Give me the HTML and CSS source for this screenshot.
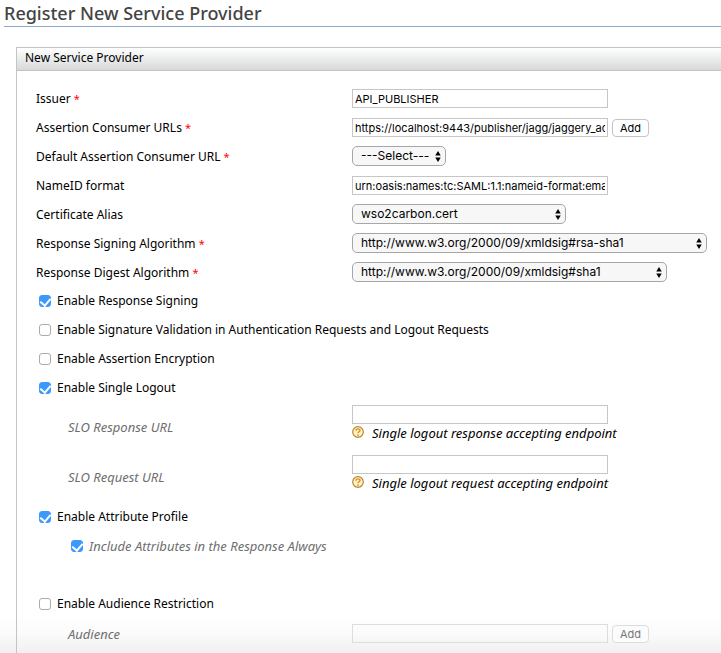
FILE: index.html
```html
<!DOCTYPE html>
<html lang="en">
<head>
<meta charset="utf-8">
<title>Register New Service Provider</title>
<link rel="stylesheet" href="styles.css">
</head>
<body>
<svg class="defs" aria-hidden="true">
  <symbol id="arrows" viewBox="0 0 6 12"><path d="M3 0 6 5H0zM3 12 0 7h6z"/></symbol>
  <symbol id="help" viewBox="0 0 12 12"><circle cx="6" cy="6" r="5.3" fill="#fdf3cf" stroke="#b8892b" stroke-width="1.2"/><path d="M4 4.7C4 2.2 8.1 2.3 8 4.5 7.9 5.8 6 5.8 6 7.3" fill="none" stroke="#e08a1e" stroke-width="1.4"/><circle cx="6" cy="9.1" r=".9" fill="#e08a1e"/></symbol>
</svg>
<main class="page">
  <h1 class="title">Register New Service Provider</h1>
  <form class="panel">
    <h2 class="panel-head">New Service Provider</h2>
    <div class="rows">
      <div class="row">
        <label for="issuer">Issuer <span class="required">*</span></label>
        <input class="text" id="issuer" type="text" value="API_PUBLISHER">
      </div>
      <div class="row">
        <label for="acs">Assertion Consumer URLs <span class="required">*</span></label>
        <div class="field"><input class="text" id="acs" type="text" value="https://localhost:9443/publisher/jagg/jaggery_acs.jag"><button class="add" type="button">Add</button></div>
      </div>
      <div class="row">
        <label for="default-acs">Default Assertion Consumer URL <span class="required">*</span></label>
        <div class="select select-s"><select id="default-acs"><option>---Select---</option></select><svg><use href="#arrows"/></svg></div>
      </div>
      <div class="row">
        <label for="nameid">NameID format</label>
        <input class="text" id="nameid" type="text" value="urn:oasis:names:tc:SAML:1.1:nameid-format:emailAddress">
      </div>
      <div class="row">
        <label for="alias">Certificate Alias</label>
        <div class="select select-m"><select id="alias"><option>wso2carbon.cert</option></select><svg><use href="#arrows"/></svg></div>
      </div>
      <div class="row">
        <label for="signing">Response Signing Algorithm <span class="required">*</span></label>
        <div class="select select-xl"><select id="signing"><option>http://www.w3.org/2000/09/xmldsig#rsa-sha1</option></select><svg><use href="#arrows"/></svg></div>
      </div>
      <div class="row">
        <label for="digest">Response Digest Algorithm <span class="required">*</span></label>
        <div class="select select-l"><select id="digest"><option>http://www.w3.org/2000/09/xmldsig#sha1</option></select><svg><use href="#arrows"/></svg></div>
      </div>
      <label class="check"><input type="checkbox" checked>Enable Response Signing</label>
      <label class="check"><input type="checkbox">Enable Signature Validation in Authentication Requests and Logout Requests</label>
      <label class="check"><input type="checkbox">Enable Assertion Encryption</label>
      <label class="check"><input type="checkbox" checked>Enable Single Logout</label>
      <div class="row row-tall">
        <label class="sub" for="slo-response">SLO Response URL</label>
        <div class="hinted"><input class="text" id="slo-response" type="text"><p class="hint"><svg><use href="#help"/></svg>Single logout response accepting endpoint</p></div>
      </div>
      <div class="row row-tall">
        <label class="sub" for="slo-request">SLO Request URL</label>
        <div class="hinted"><input class="text" id="slo-request" type="text"><p class="hint"><svg><use href="#help"/></svg>Single logout request accepting endpoint</p></div>
      </div>
      <label class="check"><input type="checkbox" checked>Enable Attribute Profile</label>
      <label class="check sub"><input type="checkbox" checked>Include Attributes in the Response Always</label>
      <label class="check spaced"><input type="checkbox">Enable Audience Restriction</label>
      <div class="row">
        <label class="sub" for="audience">Audience</label>
        <div class="field"><input class="text" id="audience" type="text" disabled><button class="add" type="button" disabled>Add</button></div>
      </div>
    </div>
  </form>
</main>
</body>
</html>
```
FILE: styles.css
```css
* {
  box-sizing: border-box;
}

body {
  margin: 0;
  background: #fff;
  color: #000;
  font-family: "Noto Sans", "Open Sans", sans-serif;
  font-size: 12px;
  line-height: 16px;
}

.defs {
  display: none;
}

.page {
  min-height: 100vh;
  padding-left: 4px;
  background: linear-gradient(to top, #f0f0f0, #fbfbfb 20px, #fff 40px);
  overflow: hidden;
}

.title {
  margin: 0;
  height: 27px;
  border-bottom: 1px solid #8ea9cb;
  color: #444;
  font-size: 18px;
  font-weight: 500;
  line-height: 27px;
}

.panel {
  margin: 20px 0 0 12px;
  border: 1px solid #c4c4c4;
  border-width: 1px 0 0 1px;
}

.panel-head {
  margin: 0;
  height: 23px;
  padding-left: 8px;
  border-bottom: 1px solid #c4c4c4;
  background: linear-gradient(#fff, #d6d8da);
  font-size: 12px;
  font-weight: 400;
  line-height: 20px;
}

.rows {
  padding: 13px 0 5px 19px;
}

.row {
  display: grid;
  grid-template-columns: 316px 1fr;
  align-items: center;
  min-height: 29px;
}

.row-tall {
  min-height: 50px;
}

.row-tall .sub {
  padding-bottom: 2px;
}

.sub {
  padding-left: 32px;
  color: #6e6e6e;
  font-size: 13px;
  font-style: italic;
}

.required {
  color: #f00;
  font-size: 11px;
}

.field {
  display: flex;
  align-items: center;
  gap: 4px;
}

.text {
  display: block;
  width: 256px;
  height: 19px;
  padding: 0 2px;
  border: 1px solid #c6c6c6;
  border-radius: 0;
  background: #fff;
  color: #000;
  font: 11px/15px Inter, sans-serif;
}

.text:disabled {
  border-color: #ddd;
  background: transparent;
}

.add {
  width: 37px;
  height: 18px;
  padding: 0;
  border: 1px solid #c4c4c4;
  border-radius: 4px;
  background: #fff;
  color: #000;
  font: 11px/14px Inter, sans-serif;
}

.add:disabled {
  border-color: #ddd;
  background: #fcfcfc;
  color: #777;
}

.select {
  position: relative;
  margin-bottom: 2px;
}

.select-s { width: 94px; }
.select-m { width: 214px; }
.select-l { width: 315px; }
.select-xl { width: 355px; }

.select select {
  display: block;
  appearance: none;
  width: 100%;
  height: 20px;
  padding: 0 8px;
  border: 1px solid #a6a6a6;
  border-radius: 5px;
  background: #f7f7f7;
  color: #000;
  font: 12px/18px Inter, sans-serif;
}

.select svg {
  position: absolute;
  top: 5px;
  right: 5px;
  width: 6px;
  height: 11px;
  pointer-events: none;
}

.check {
  display: flex;
  align-items: center;
  gap: 6px;
  height: 29px;
  padding: 0 0 2px 3px;
}

.check.sub {
  padding-left: 35px;
}

.check.spaced {
  margin-top: 29px;
}

.check input {
  appearance: none;
  display: grid;
  place-items: center;
  width: 12px;
  height: 12px;
  margin: 0;
  border: 1px solid #ababab;
  border-radius: 3px;
  background: #fff;
}

.check input:checked {
  border-color: #3b99fc;
  background: #3b99fc;
}

.check input:checked::after {
  content: "";
  width: 5px;
  height: 8px;
  margin-bottom: 2px;
  border: solid #fff;
  border-width: 0 2px 2px 0;
  transform: rotate(40deg);
}

.hinted {
  align-self: start;
  padding-top: 2px;
}

.hint {
  display: flex;
  align-items: center;
  gap: 8px;
  margin: 1px 0 0;
  font-size: 13px;
  font-style: italic;
}

.hint svg {
  width: 12px;
  height: 12px;
  margin-bottom: 2px;
}
```
